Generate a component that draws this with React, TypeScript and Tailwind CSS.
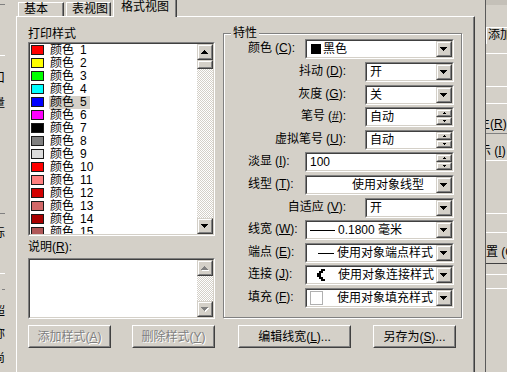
import React from 'react';

const colors = [
  '#ff0000', '#ffff00', '#00ff00', '#00ffff', '#0000ff', '#ff00ff', '#000000', '#808080',
  '#dcdcdc', '#ff0000', '#ff7f7f', '#d20000', '#d26969', '#a80000', '#b05858',
];

const dither =
  'bg-[image:repeating-conic-gradient(#ffffff_0%_25%,#d4d0c8_0%_50%)] bg-[length:2px_2px]';

function Tri({ dir, c = '#000', shadow = false }: { dir: 'up' | 'down'; c?: string; shadow?: boolean }) {
  const rows = dir === 'up' ? [1, 3, 5, 7] : [7, 5, 3, 1];
  return (
    <svg width="8" height="5" viewBox="0 0 8 5" shapeRendering="crispEdges">
      {shadow &&
        rows.map((w, i) => (
          <rect key={'s' + i} x={(7 - w) / 2 + 1} y={i + 1} width={w} height={1} fill="#fff" />
        ))}
      {rows.map((w, i) => (
        <rect key={i} x={(7 - w) / 2} y={i} width={w} height={1} fill={c} />
      ))}
    </svg>
  );
}

function TinyTri({ dir }: { dir: 'up' | 'down' }) {
  const rows = dir === 'up' ? [1, 3] : [3, 1];
  return (
    <svg width="3" height="2" viewBox="0 0 3 2" shapeRendering="crispEdges">
      {rows.map((w, i) => (
        <rect key={i} x={(3 - w) / 2} y={i} width={w} height={1} fill="#000" />
      ))}
    </svg>
  );
}

function Raised({ className = '', children }: { className?: string; children?: React.ReactNode }) {
  return (
    <div className={`shrink-0 border border-t-[#d4d0c8] border-l-[#d4d0c8] border-r-[#404040] border-b-[#404040] ${className}`}>
      <div className="w-full h-full border border-t-white border-l-white border-r-[#808080] border-b-[#808080] bg-[#d4d0c8] flex items-center justify-center">
        {children}
      </div>
    </div>
  );
}

function Sunken({ className = '', children }: { className?: string; children?: React.ReactNode }) {
  return (
    <div className={`shrink-0 border border-t-[#808080] border-l-[#808080] border-r-white border-b-white ${className}`}>
      <div className="w-full h-full border border-t-[#404040] border-l-[#404040] border-r-[#d4d0c8] border-b-[#d4d0c8] bg-white flex">
        {children}
      </div>
    </div>
  );
}

function PushButton({ className = '', disabled = false, children }: { className?: string; disabled?: boolean; children: React.ReactNode }) {
  return (
    <div className={`shrink-0 h-[23px] border border-t-white border-l-white border-r-[#404040] border-b-[#404040] ${className}`}>
      <div
        className={`w-full h-full border border-t-[#d4d0c8] border-l-[#d4d0c8] border-r-[#808080] border-b-[#808080] flex items-center justify-center whitespace-nowrap ${
          disabled ? 'text-[#808080] [text-shadow:1px_1px_0_#fff]' : ''
        }`}
      >
        {children}
      </div>
    </div>
  );
}

function Key({ t, k, tail = ':' }: { t: string; k: string; tail?: string }) {
  return (
    <span className="whitespace-nowrap">
      {t}
      <span className="ml-[3px]">
        (<span className="underline">{k}</span>){tail}
      </span>
    </span>
  );
}

function VScroll({ disabled = false, thumb = false }: { disabled?: boolean; thumb?: boolean }) {
  const c = disabled ? '#808080' : '#000';
  return (
    <div className="w-[16px] h-full flex flex-col shrink-0">
      <Raised className="w-[16px] h-[16px]">
        <Tri dir="up" c={c} shadow={disabled} />
      </Raised>
      {thumb && <Raised className="w-[16px] h-[9px]" />}
      <div className={`flex-1 ${dither}`} />
      <Raised className="w-[16px] h-[16px]">
        <Tri dir="down" c={c} shadow={disabled} />
      </Raised>
    </div>
  );
}

function Spin() {
  return (
    <div className="w-[16px] h-[16px] flex flex-col shrink-0">
      <Raised className="w-[16px] h-[8px]">
        <TinyTri dir="up" />
      </Raised>
      <Raised className="w-[16px] h-[8px]">
        <TinyTri dir="down" />
      </Raised>
    </div>
  );
}

function Row({
  mt,
  label,
  wide,
  btn,
  inner = 'pl-[3px]',
  children,
}: {
  mt: string;
  label: React.ReactNode;
  wide: boolean;
  btn: 'drop' | 'spin';
  inner?: string;
  children: React.ReactNode;
}) {
  return (
    <div className={`flex items-center h-[20px] ${mt}`}>
      {wide ? (
        <div className="w-[81px] pl-[24px] -mt-[3px]">{label}</div>
      ) : (
        <div className="w-[141px] pr-[19px] text-right -mt-[3px]">{label}</div>
      )}
      <Sunken className={wide ? 'w-[149px] h-[20px]' : 'w-[89px] h-[20px]'}>
        <div className={`flex-1 flex items-center overflow-hidden whitespace-nowrap ${inner}`}>{children}</div>
        {btn === 'drop' ? (
          <Raised className="w-[16px] h-[16px]">
            <Tri dir="down" />
          </Raised>
        ) : (
          <Spin />
        )}
      </Sunken>
    </div>
  );
}

function Frag({ t, className = '' }: { t: string; className?: string }) {
  return (
    <div className={`w-[5px] h-[12px] overflow-hidden leading-[12px] whitespace-nowrap ${className}`}>
      <span className="block w-[12px] -ml-[7px]">{t}</span>
    </div>
  );
}

export default function App() {
  return (
    <div className="w-[507px] h-[372px] overflow-hidden bg-[#d4d0c8] flex text-[12px] leading-[14px] text-black [font-family:'Liberation_Sans','Noto_Sans_CJK_SC',sans-serif]">
      {/* left strip of the window behind */}
      <div className="w-[16px] shrink-0 flex flex-col">
        <div className="w-[5px] h-[5px] border-b border-[#808080]" />
        <div className="w-[5px] h-[51px] border-b border-white" />
        <Frag t="口" className="mt-[16px]" />
        <Frag t="量" className="mt-[13px]" />
        <div className="w-[5px] h-[105px] border-b border-[#808080]" />
        <Frag t="标" className="mt-[13px]" />
        <div className="w-[5px] h-[35px] border-b border-white" />
        <div className="w-[3px] h-px bg-[#808080] mt-[15px] ml-[2px]" />
        <Frag t="超" className="mt-[15px]" />
        <Frag t="称" className="mt-[11px]" />
        <Frag t="尚" className="mt-[12px]" />
      </div>

      {/* dialog tab control */}
      <div className="w-[459px] shrink-0 flex flex-col">
        <div className="h-[16px] flex items-end pl-[2px] gap-[2px]">
          <div className="w-[46px] h-[14px] border-t border-l border-white border-r border-r-[#404040] shadow-[inset_-1px_0_0_#808080] pl-[5px] leading-[13px]">
            基本
          </div>
          <div className="w-[45px] h-[14px] border-t border-l border-white border-r border-r-[#404040] shadow-[inset_-1px_0_0_#808080] pl-[5px] leading-[13px]">
            表视图
          </div>
          <div className="relative z-10 w-[64px] h-[18px] -mb-px bg-[#d4d0c8] border-t border-l border-white border-r border-r-[#404040] shadow-[inset_-1px_0_0_#808080] pl-[7px] leading-[15px]">
            格式视图
          </div>
        </div>

        <div className="flex-1 border-t border-l border-white border-r border-r-[#404040] shadow-[inset_-1px_0_0_#808080] flex pl-[11px] pt-[9px]">
          {/* left column */}
          <div className="w-[187px] shrink-0 flex flex-col">
            <div className="h-[16px] leading-[16px]">打印样式</div>
            <Sunken className="w-[187px] h-[194px]">
              <div className="flex-1 overflow-hidden">
                {colors.map((c, i) => (
                  <div key={i} className="h-[13px] flex items-start pl-[1px]">
                    <span className="mt-[1px] w-[13px] h-[10px] border border-[#1a1a1a] shrink-0" style={{ background: c }} />
                    <span
                      className={`ml-[5px] pl-[1px] pr-[3px] h-[13px] leading-[13px] whitespace-nowrap ${
                        i === 4 ? 'bg-[#d4d0c8]' : ''
                      }`}
                    >
                      颜色<span className="ml-[6px]">{i + 1}</span>
                    </span>
                  </div>
                ))}
              </div>
              <VScroll thumb />
            </Sunken>
            <div className="h-[22px] flex items-center">
              <span>
                说明(<span className="underline">R</span>):
              </span>
            </div>
            <Sunken className="w-[187px] h-[61px]">
              <div className="flex-1" />
              <VScroll disabled />
            </Sunken>
            <div className="mt-[6px] flex justify-between">
              <PushButton className="w-[83px]" disabled>
                添加样式(<span className="underline">A</span>)
              </PushButton>
              <PushButton className="w-[83px]" disabled>
                删除样式(<span className="underline">Y</span>)
              </PushButton>
            </div>
          </div>

          {/* right column */}
          <div className="ml-[8px] w-[240px] shrink-0 flex flex-col">
            <div className="relative mt-[7px] w-[239px] h-[285px] border border-[#808080] shadow-[1px_1px_0_#fff,inset_1px_1px_0_#fff]">
              <span className="absolute left-[7px] -top-[8px] px-[2px] bg-[#d4d0c8] leading-[14px]">特性</span>
              <div className="pt-[5px] flex flex-col">
                <Row mt="mt-0" wide btn="drop" label={<Key t="颜色" k="C" />}>
                  <span className="w-[10px] h-[10px] bg-black mr-[2px] ml-[1px]" />
                  黑色
                </Row>
                <Row mt="mt-[3px]" wide={false} btn="drop" label={<Key t="抖动" k="D" />}>
                  开
                </Row>
                <Row mt="mt-[3px]" wide={false} btn="drop" label={<Key t="灰度" k="G" />}>
                  关
                </Row>
                <Row mt="mt-[2px]" wide={false} btn="spin" label={<Key t="笔号" k="#" />}>
                  自动
                </Row>
                <Row mt="mt-[3px]" wide={false} btn="spin" label={<Key t="虚拟笔号" k="U" />}>
                  自动
                </Row>
                <Row mt="mt-[2px]" wide btn="spin" label={<Key t="淡显" k="I" />}>
                  100
                </Row>
                <Row mt="mt-[3px]" wide btn="drop" inner="justify-end pr-[12px]" label={<Key t="线型" k="T" />}>
                  使用对象线型
                </Row>
                <Row mt="mt-[3px]" wide={false} btn="drop" label={<Key t="自适应" k="V" />}>
                  开
                </Row>
                <Row mt="mt-[2px]" wide btn="drop" label={<Key t="线宽" k="W" />}>
                  <span className="w-[25px] h-px bg-black mr-[3px]" />
                  0.1800 毫米
                </Row>
                <Row mt="mt-[3px]" wide btn="drop" label={<Key t="端点" k="E" />}>
                  <span className="ml-[8px] w-[16px] h-px bg-black mr-[3px]" />
                  使用对象端点样式
                </Row>
                <Row mt="mt-[2px]" wide btn="drop" label={<Key t="连接" k="J" />}>
                  <svg width="10" height="12" viewBox="0 0 10 12" className="ml-[6px] mr-[12px] shrink-0" shapeRendering="crispEdges">
                    <path d="M5 0h4v2h-2v2h-2v4h2v2h2v2h-4v-2h-2v-2h-2v-4h2v-2h2z" fill="#000" />
                  </svg>
                  使用对象连接样式
                </Row>
                <Row mt="mt-[3px]" wide btn="drop" label={<Key t="填充" k="F" />}>
                  <span className="w-[13px] h-[14px] border border-[#b0b0b0] mr-[14px] shrink-0" />
                  使用对象填充样式
                </Row>
              </div>
            </div>
            <div className="mt-[7px] flex pl-[15px]">
              <PushButton className="w-[113px]">
                编辑线宽(<span className="underline">L</span>)...
              </PushButton>
              <PushButton className="w-[83px] ml-[22px]">
                另存为(<span className="underline">S</span>)...
              </PushButton>
            </div>
          </div>
        </div>
      </div>

      {/* gap, then the window behind on the right */}
      <div className="w-[10px] shrink-0" />
      <div className="flex-1 border-l border-[#5a5a5a] flex flex-col overflow-hidden">
        <div className="h-[5px] bg-[#c4c0b8]" />
        <div className="h-[22px]" />
        <div className="h-[17px] border-t border-l border-white pl-[1px] leading-[15px] whitespace-nowrap overflow-hidden">添加</div>
        <div className="h-[10px] border-b border-white" />
        <div className="h-[33px] border-b border-white" />
        <div className="h-[17px] border-b border-white" />
        <div className="h-[30px] border-b border-[#808080] flex items-end overflow-hidden whitespace-nowrap pb-[2px]">
          <span className="shrink-0 -ml-[8px]">生(<span className="underline">R</span>)</span>
        </div>
        <div className="h-[27px] border-b border-white flex items-end overflow-hidden whitespace-nowrap pb-[2px]">
          <span className="shrink-0 -ml-[7px]">示 (<span className="underline">I</span>)</span>
        </div>
        <div className="h-[53px] border-b border-white" />
        <div className="h-[19px] border-b border-white" />
        <div className="h-[31px] border-b border-[#404040] flex items-end overflow-hidden whitespace-nowrap pb-[4px]">
          <span className="shrink-0">置 (G</span>
        </div>
        <div className="h-[11px] border-b border-white" />
        <div className="h-[14px] border-b border-white" />
      </div>
    </div>
  );
}
